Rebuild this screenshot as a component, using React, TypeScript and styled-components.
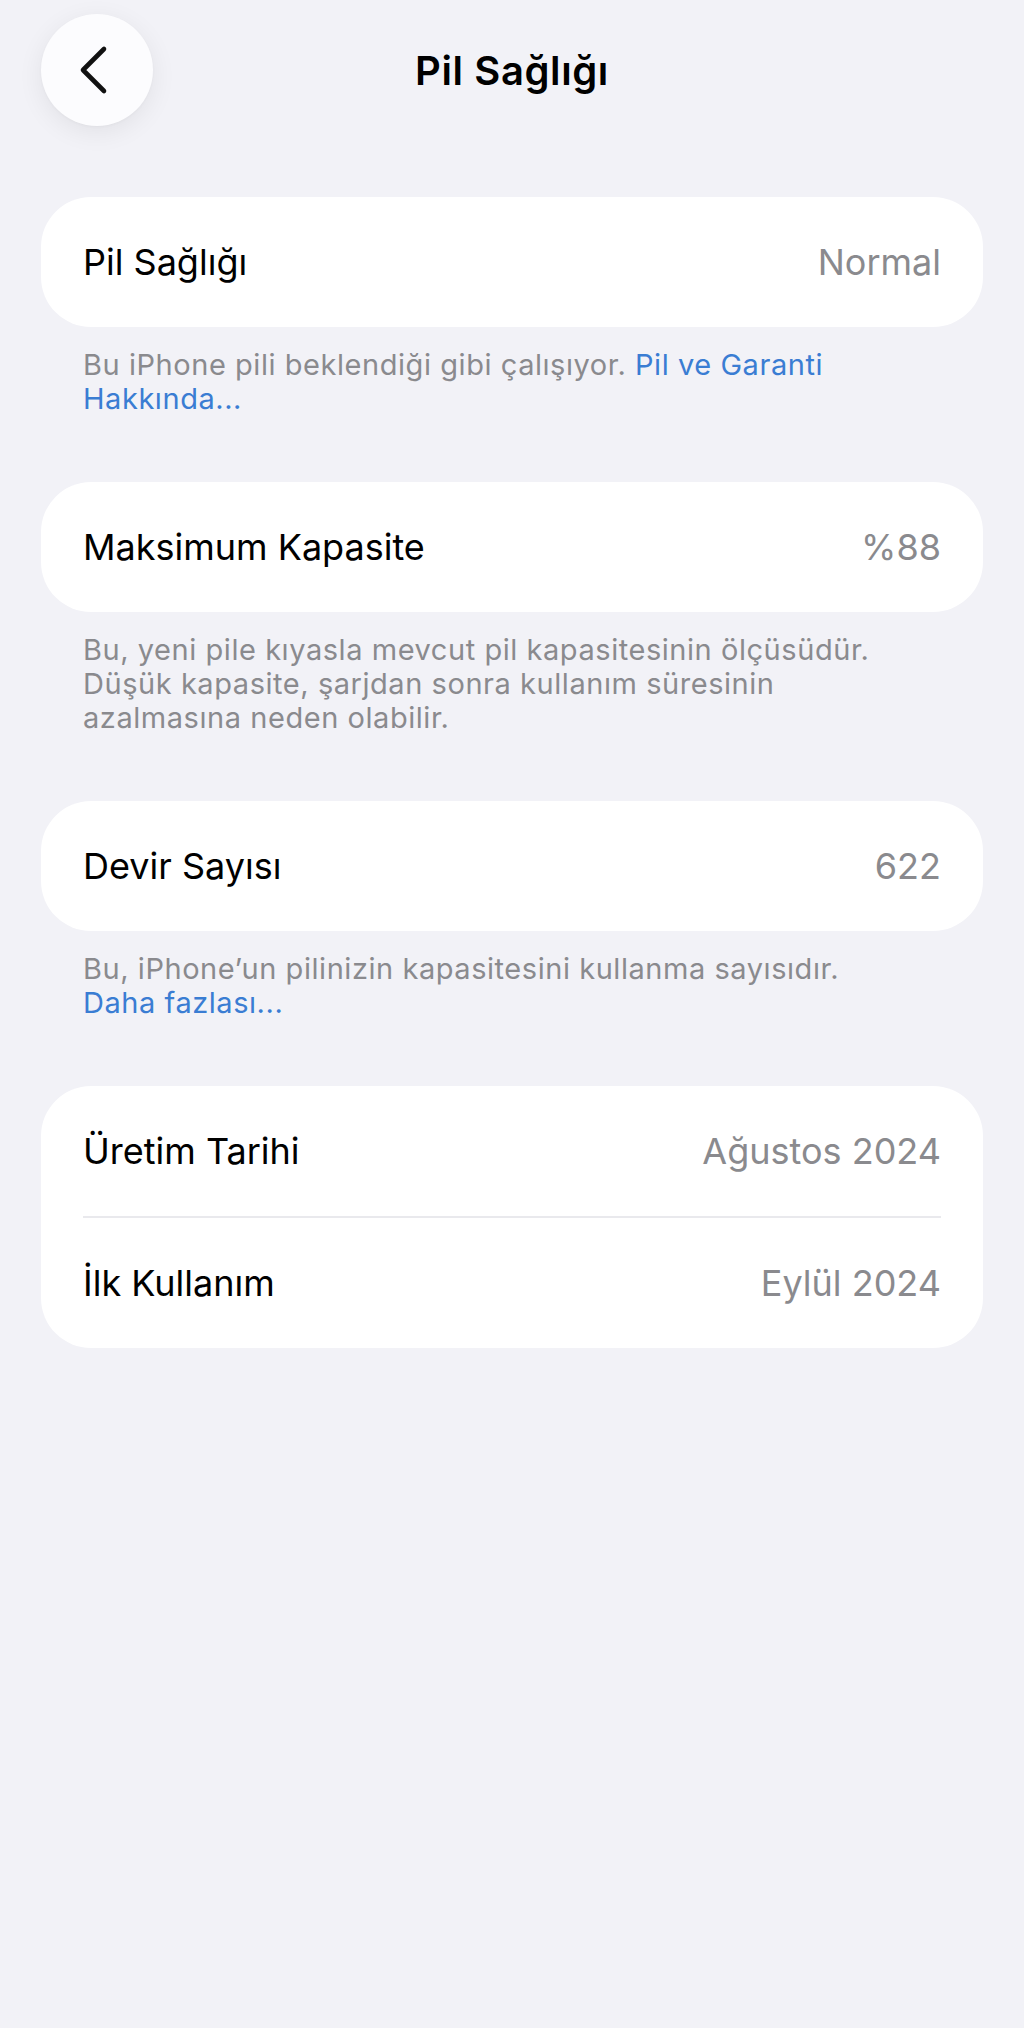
import React from 'react';
import styled, { createGlobalStyle } from 'styled-components';

const GlobalStyle = createGlobalStyle`
  html, body {
    margin: 0;
    padding: 0;
    background: #f2f2f7;
  }
  body {
    font-family: Inter, "Noto Sans", "Liberation Sans", sans-serif;
    -webkit-font-smoothing: antialiased;
  }
`;

const Page = styled.div`
  min-height: 2028px;
  background: #f2f2f7;
  padding-top: 14px;
  box-sizing: border-box;
`;

const Header = styled.header`
  display: grid;
  grid-template-columns: 112px 1fr 112px;
  align-items: center;
  padding: 0 41px;
  height: 112px;
`;

const BackButton = styled.button`
  width: 112px;
  height: 112px;
  border-radius: 50%;
  border: none;
  background: #fcfcfe;
  box-shadow: 0 6px 26px rgba(0, 0, 0, 0.07), 0 1px 3px rgba(0, 0, 0, 0.03);
  display: flex;
  align-items: center;
  justify-content: center;
  padding: 0 6px 0 0;
  cursor: pointer;
`;

const Title = styled.h1`
  margin: 0;
  text-align: center;
  font-size: 40px;
  font-weight: 600;
  color: #000;
  letter-spacing: 0.6px;
`;

const Content = styled.main`
  display: flex;
  flex-direction: column;
  gap: 66px;
  padding: 71px 41px 0;
`;

const Section = styled.section`
  display: flex;
  flex-direction: column;
`;

const Card = styled.div`
  background: #fff;
  border-radius: 50px;
  display: flex;
  flex-direction: column;
`;

const Row = styled.div`
  height: 130px;
  padding: 0 42px;
  display: flex;
  align-items: center;
  justify-content: space-between;
  font-size: 36px;
  line-height: 36px;
`;

const Label = styled.span`
  color: #000;
`;

const Value = styled.span`
  color: #8a8a8e;
`;

const Divider = styled.div`
  height: 2px;
  margin: 0 42px;
  background: #e9e9ed;
`;

const Footer = styled.p`
  margin: 0;
  padding: 21px 42px 0;
  font-size: 29px;
  line-height: 34px;
  letter-spacing: 0.55px;
  color: #8a8a8e;
`;

const Link = styled.a`
  color: #3a7dd3;
  text-decoration: none;
`;

const ChevronLeft = () => (
  <svg width="32" height="50" viewBox="0 0 32 50" fill="none">
    <polyline
      points="26,4 5,25 26,46"
      stroke="#111"
      strokeWidth="4.6"
      strokeLinecap="round"
      strokeLinejoin="round"
    />
  </svg>
);

const App: React.FC = () => {
  return (
    <>
      <GlobalStyle />
      <Page>
        <Header>
          <BackButton aria-label="Geri">
            <ChevronLeft />
          </BackButton>
          <Title>Pil Sağlığı</Title>
          <span />
        </Header>

        <Content>
          <Section>
            <Card>
              <Row>
                <Label>Pil Sağlığı</Label>
                <Value>Normal</Value>
              </Row>
            </Card>
            <Footer>
              Bu iPhone pili beklendiği gibi çalışıyor. <Link href="#">Pil ve Garanti</Link>
              <br />
              <Link href="#">Hakkında...</Link>
            </Footer>
          </Section>

          <Section>
            <Card>
              <Row>
                <Label>Maksimum Kapasite</Label>
                <Value>%88</Value>
              </Row>
            </Card>
            <Footer>
              Bu, yeni pile kıyasla mevcut pil kapasitesinin ölçüsüdür.
              <br />
              Düşük kapasite, şarjdan sonra kullanım süresinin
              <br />
              azalmasına neden olabilir.
            </Footer>
          </Section>

          <Section>
            <Card>
              <Row>
                <Label>Devir Sayısı</Label>
                <Value>622</Value>
              </Row>
            </Card>
            <Footer>
              Bu, iPhone’un pilinizin kapasitesini kullanma sayısıdır.
              <br />
              <Link href="#">Daha fazlası...</Link>
            </Footer>
          </Section>

          <Section>
            <Card>
              <Row>
                <Label>Üretim Tarihi</Label>
                <Value>Ağustos 2024</Value>
              </Row>
              <Divider />
              <Row>
                <Label>İlk Kullanım</Label>
                <Value>Eylül 2024</Value>
              </Row>
            </Card>
          </Section>
        </Content>
      </Page>
    </>
  );
};

export default App;
